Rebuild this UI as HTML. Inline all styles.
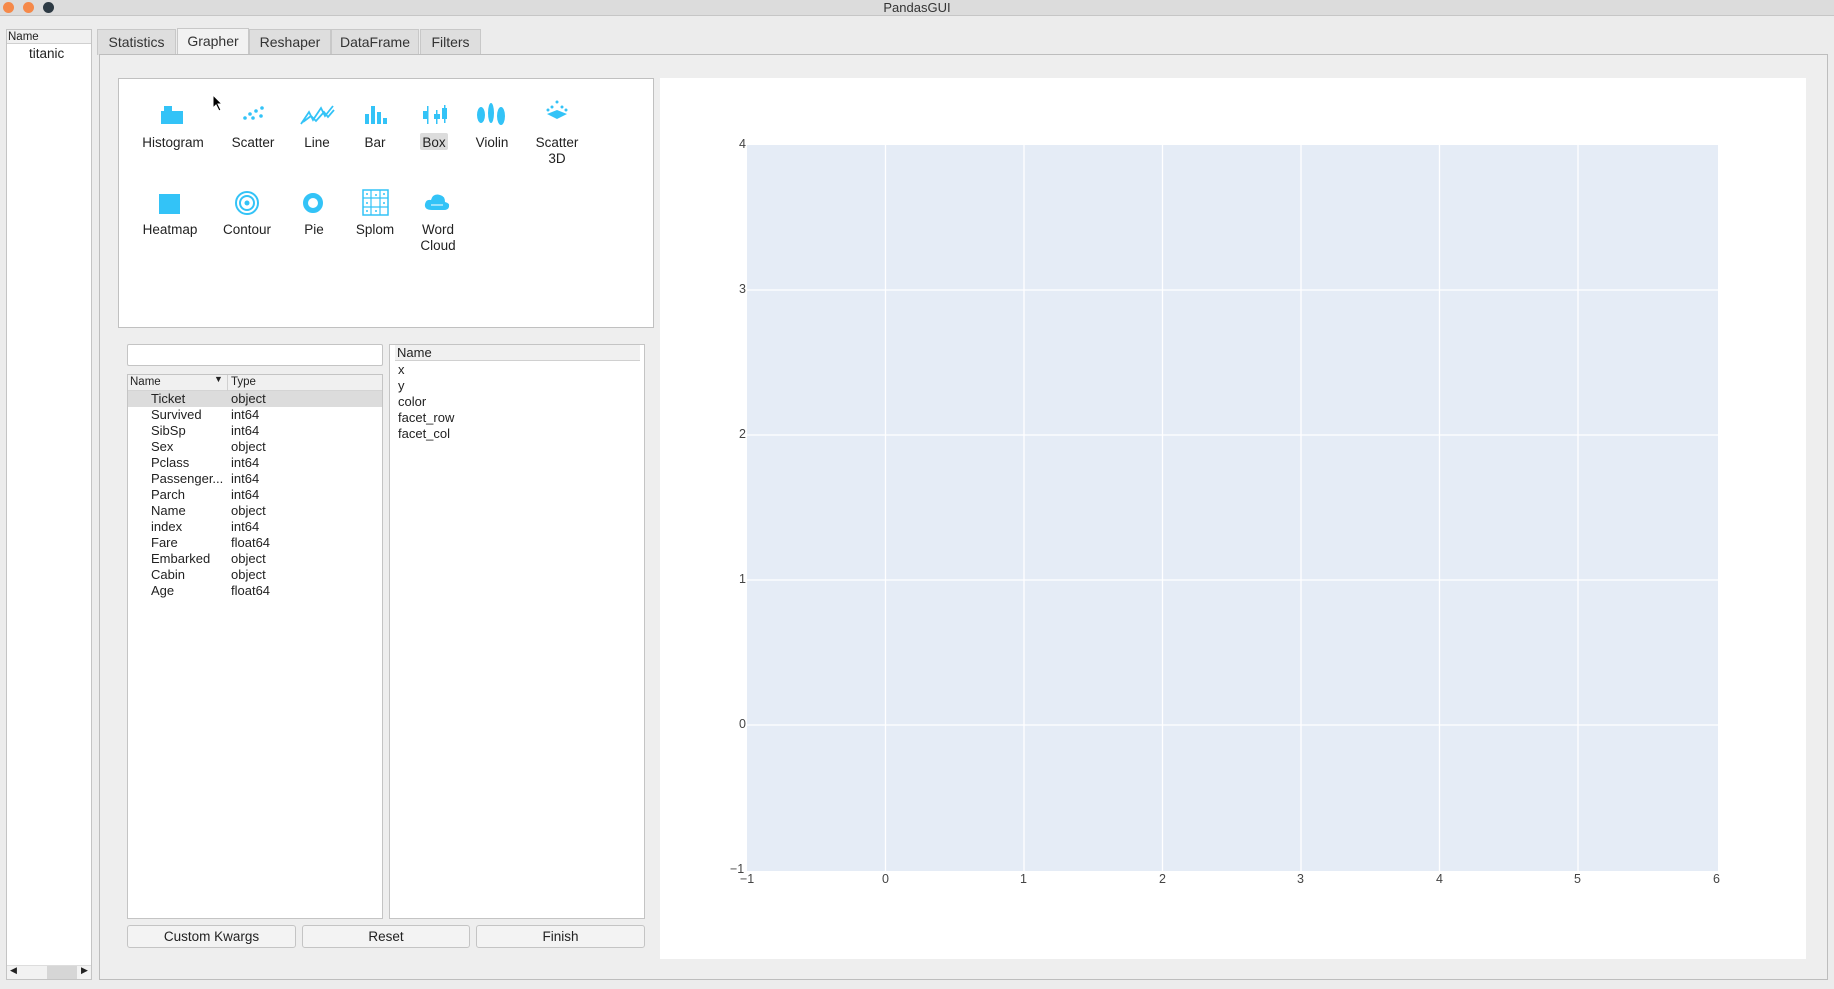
<!DOCTYPE html>
<html><head><meta charset="utf-8"><style>
*{box-sizing:border-box;margin:0;padding:0}
body{width:1834px;height:989px;background:#ececec;font-family:"Liberation Sans",sans-serif;color:#222;position:relative;overflow:hidden;font-size:13px}
.a{position:absolute}
.t{position:absolute;white-space:nowrap}
.tab{position:absolute;top:29px;height:26px;border:1px solid #c8c8c8;border-bottom:none;background:#dedede;font-size:14px;text-align:center;line-height:25px;color:#333}
.lbl{position:absolute;font-size:13.5px;text-align:center;width:90px;line-height:16px;color:#222}
.btn{position:absolute;top:925px;height:23px;border:1px solid #c4c4c4;border-radius:3px;background:#f3f3f3;text-align:center;line-height:21px;font-size:13.5px}
.row{position:absolute;font-size:13px;line-height:16px}
.ax{position:absolute;font-size:12.5px;color:#444}
</style></head><body>
<div class="a" style="left:0;top:0;width:1834px;height:16px;background:#dcdcdc;border-bottom:1px solid #c6c6c6"></div>
<div class="a" style="left:3px;top:2px;width:11px;height:11px;border-radius:50%;background:#f5894a"></div>
<div class="a" style="left:23px;top:2px;width:11px;height:11px;border-radius:50%;background:#f5894a"></div>
<div class="a" style="left:43px;top:2px;width:11px;height:11px;border-radius:50%;background:#2d3a44"></div>
<div class="t" style="left:0;width:1834px;text-align:center;top:0;font-size:13px;line-height:15px;color:#333">PandasGUI</div>

<div class="a" style="left:6px;top:29px;width:86px;height:951px;background:#fff;border:1px solid #c4c4c4"></div>
<div class="a" style="left:7px;top:30px;width:84px;height:14px;background:#f0f0f0;border-bottom:1px solid #d0d0d0"></div>
<div class="t" style="left:8px;top:30px;font-size:11.5px;line-height:14px">Name</div>
<div class="t" style="left:29px;top:46px;font-size:13.5px">titanic</div>
<div class="a" style="left:7px;top:965px;width:84px;height:14px;background:#f2f2f2;border-top:1px solid #ddd"></div>
<div class="a" style="left:47px;top:966px;width:30px;height:13px;background:#d6d6d6"></div>
<div class="t" style="left:10px;top:965px;font-size:9px">◀</div>
<div class="t" style="left:81px;top:965px;font-size:9px">▶</div>

<div class="tab" style="left:97px;width:79px">Statistics</div>
<div class="tab" style="left:177px;width:72px;background:#f2f2f2;top:28px;height:27px">Grapher</div>
<div class="tab" style="left:249px;width:82px">Reshaper</div>
<div class="tab" style="left:331px;width:88px">DataFrame</div>
<div class="tab" style="left:420px;width:61px">Filters</div>

<div class="a" style="left:99px;top:54px;width:1729px;height:926px;border:1px solid #bdbdbd;background:#eeeeee"></div>

<div class="a" style="left:118px;top:78px;width:536px;height:250px;background:#fff;border:1px solid #c0c0c0"></div>
<svg class="a" style="left:118px;top:78px" width="536" height="250" fill="#33c3f7">
<rect x="43" y="33" width="22" height="13"/><rect x="46" y="28" width="8" height="6"/>
<g transform="translate(-15,0)"><circle cx="142" cy="40" r="1.8"/><circle cx="147" cy="36" r="1.8"/><circle cx="150" cy="40" r="1.8"/><circle cx="153" cy="33" r="1.8"/><circle cx="158" cy="38" r="1.8"/><circle cx="159" cy="30" r="1.8"/></g>
<g transform="translate(-5,0)"><path d="M188 46 L196 34 L200 42 L208 30 L212 38 L220 28 M190 44 L198 38 L203 43 L211 34 L215 39 L221 32" stroke="#33c3f7" stroke-width="1.8" fill="none"/></g>
<rect x="247" y="36" width="4" height="10"/><rect x="253" y="28" width="4" height="18"/><rect x="259" y="34" width="4" height="12"/><rect x="265" y="40" width="4" height="6"/>
<rect x="305" y="33" width="5" height="8"/><rect x="309" y="28" width="1.5" height="18"/><rect x="316" y="36" width="6" height="5"/><rect x="318" y="32" width="1.5" height="14"/><rect x="324" y="30" width="5" height="11"/><rect x="326" y="27" width="1.5" height="18"/>
<ellipse cx="363" cy="37" rx="4" ry="8"/><ellipse cx="373" cy="35" rx="3" ry="10"/><ellipse cx="383" cy="38" rx="4" ry="9"/>
<g transform="translate(-109,0)"><path d="M548 32 L558 36 L548 41 L538 36Z"/><circle cx="548" cy="24" r="1.5"/><circle cx="543" cy="29" r="1.5"/><circle cx="553" cy="29" r="1.5"/><circle cx="539" cy="32" r="1.5"/><circle cx="557" cy="32" r="1.5"/></g>
<rect x="41" y="116" width="21" height="20"/>
<circle cx="129" cy="125" r="11" fill="none" stroke="#33c3f7" stroke-width="2"/><circle cx="129" cy="125" r="7" fill="none" stroke="#33c3f7" stroke-width="2"/><circle cx="129" cy="125" r="2.5"/>
<circle cx="195" cy="125" r="7.5" fill="none" stroke="#33c3f7" stroke-width="5"/>
<rect x="245" y="112" width="25" height="25" fill="none" stroke="#33c3f7" stroke-width="1.5"/><path d="M253 112V137M262 112V137M245 120H270M245 129H270" stroke="#33c3f7" stroke-width="1.2"/><circle cx="249" cy="116" r="1"/><circle cx="258" cy="117" r="1"/><circle cx="266" cy="116" r="1"/><circle cx="249" cy="125" r="1"/><circle cx="266" cy="125" r="1"/><circle cx="249" cy="133" r="1"/><circle cx="258" cy="133" r="1"/>
<g transform="translate(5,0)"><path d="M309 132 Q301 132 302 126 Q303 121 308 122 Q310 115 317 117 Q322 118 322 124 Q327 125 326 129 Q325 132 321 132Z"/><path d="M308 127H320" stroke="#fff" stroke-width="1"/></g>
</svg>
<div class="a" style="left:420px;top:133px;width:28px;height:17px;background:#dcdcdc;border-radius:2px"></div>
<div class="lbl" style="left:128px;top:135px">Histogram</div>
<div class="lbl" style="left:208px;top:135px">Scatter</div>
<div class="lbl" style="left:272px;top:135px">Line</div>
<div class="lbl" style="left:330px;top:135px">Bar</div>
<div class="lbl" style="left:389px;top:135px">Box</div>
<div class="lbl" style="left:447px;top:135px">Violin</div>
<div class="lbl" style="left:512px;top:135px">Scatter<br>3D</div>
<div class="lbl" style="left:125px;top:222px">Heatmap</div>
<div class="lbl" style="left:202px;top:222px">Contour</div>
<div class="lbl" style="left:269px;top:222px">Pie</div>
<div class="lbl" style="left:330px;top:222px">Splom</div>
<div class="lbl" style="left:393px;top:222px">Word<br>Cloud</div>
<svg class="a" style="left:212px;top:94px" width="12" height="18"><path d="M1 1 L1 14 L4 11 L7 17 L9 16 L6 10 L10 10Z" fill="#000" stroke="#fff" stroke-width="1"/></svg>

<div class="a" style="left:127px;top:344px;width:256px;height:22px;background:#fff;border:1px solid #c4c4c4;border-radius:2px"></div>
<div class="a" style="left:127px;top:374px;width:256px;height:545px;background:#fff;border:1px solid #c4c4c4"></div>
<div class="a" style="left:128px;top:375px;width:254px;height:16px;background:#f0f0f0;border-bottom:1px solid #d4d4d4"></div>
<div class="a" style="left:227px;top:375px;width:1px;height:16px;background:#d0d0d0"></div>
<div class="t" style="left:130px;top:376px;font-size:11.5px">Name</div>
<div class="t" style="left:214px;top:374px;font-size:9px">▼</div>
<div class="t" style="left:231px;top:376px;font-size:11.5px">Type</div>
<div class="a" style="left:128px;top:391px;width:254px;height:16px;background:#dcdcdc"></div>
<div class="row" style="left:151px;top:391px">Ticket<br>Survived<br>SibSp<br>Sex<br>Pclass<br>Passenger...<br>Parch<br>Name<br>index<br>Fare<br>Embarked<br>Cabin<br>Age</div>
<div class="row" style="left:231px;top:391px">object<br>int64<br>int64<br>object<br>int64<br>int64<br>int64<br>object<br>int64<br>float64<br>object<br>object<br>float64</div>

<div class="a" style="left:389px;top:344px;width:256px;height:575px;background:#fff;border:1px solid #c4c4c4"></div>
<div class="a" style="left:395px;top:345px;width:245px;height:16px;background:#f0f0f0;border-bottom:1px solid #d0d0d0"></div>
<div class="t" style="left:397px;top:345px;font-size:13px">Name</div>
<div class="row" style="left:398px;top:362px">x<br>y<br>color<br>facet_row<br>facet_col</div>

<div class="btn" style="left:127px;width:169px">Custom Kwargs</div>
<div class="btn" style="left:302px;width:168px">Reset</div>
<div class="btn" style="left:476px;width:169px">Finish</div>

<div class="a" style="left:660px;top:78px;width:1146px;height:881px;background:#fff"></div>
<svg class="a" style="left:747px;top:145px" width="971" height="726">
<rect width="971" height="726" fill="#e5ecf6"/>
<g stroke="#fff" stroke-width="1.3">
<line x1="138.5" y1="0" x2="138.5" y2="726"/><line x1="277" y1="0" x2="277" y2="726"/><line x1="415.5" y1="0" x2="415.5" y2="726"/><line x1="554" y1="0" x2="554" y2="726"/><line x1="692.5" y1="0" x2="692.5" y2="726"/><line x1="831" y1="0" x2="831" y2="726"/>
<line x1="0" y1="145" x2="971" y2="145"/><line x1="0" y1="290" x2="971" y2="290"/><line x1="0" y1="435" x2="971" y2="435"/><line x1="0" y1="580" x2="971" y2="580"/>
</g></svg>
<div class="ax" style="left:739px;top:137px">4</div>
<div class="ax" style="left:739px;top:282px">3</div>
<div class="ax" style="left:739px;top:427px">2</div>
<div class="ax" style="left:739px;top:572px">1</div>
<div class="ax" style="left:739px;top:717px">0</div>
<div class="ax" style="left:730px;top:862px">−1</div>
<div class="ax" style="left:740px;top:872px">−1</div>
<div class="ax" style="left:882px;top:872px">0</div>
<div class="ax" style="left:1020px;top:872px">1</div>
<div class="ax" style="left:1159px;top:872px">2</div>
<div class="ax" style="left:1297px;top:872px">3</div>
<div class="ax" style="left:1436px;top:872px">4</div>
<div class="ax" style="left:1574px;top:872px">5</div>
<div class="ax" style="left:1713px;top:872px">6</div>
</body></html>
